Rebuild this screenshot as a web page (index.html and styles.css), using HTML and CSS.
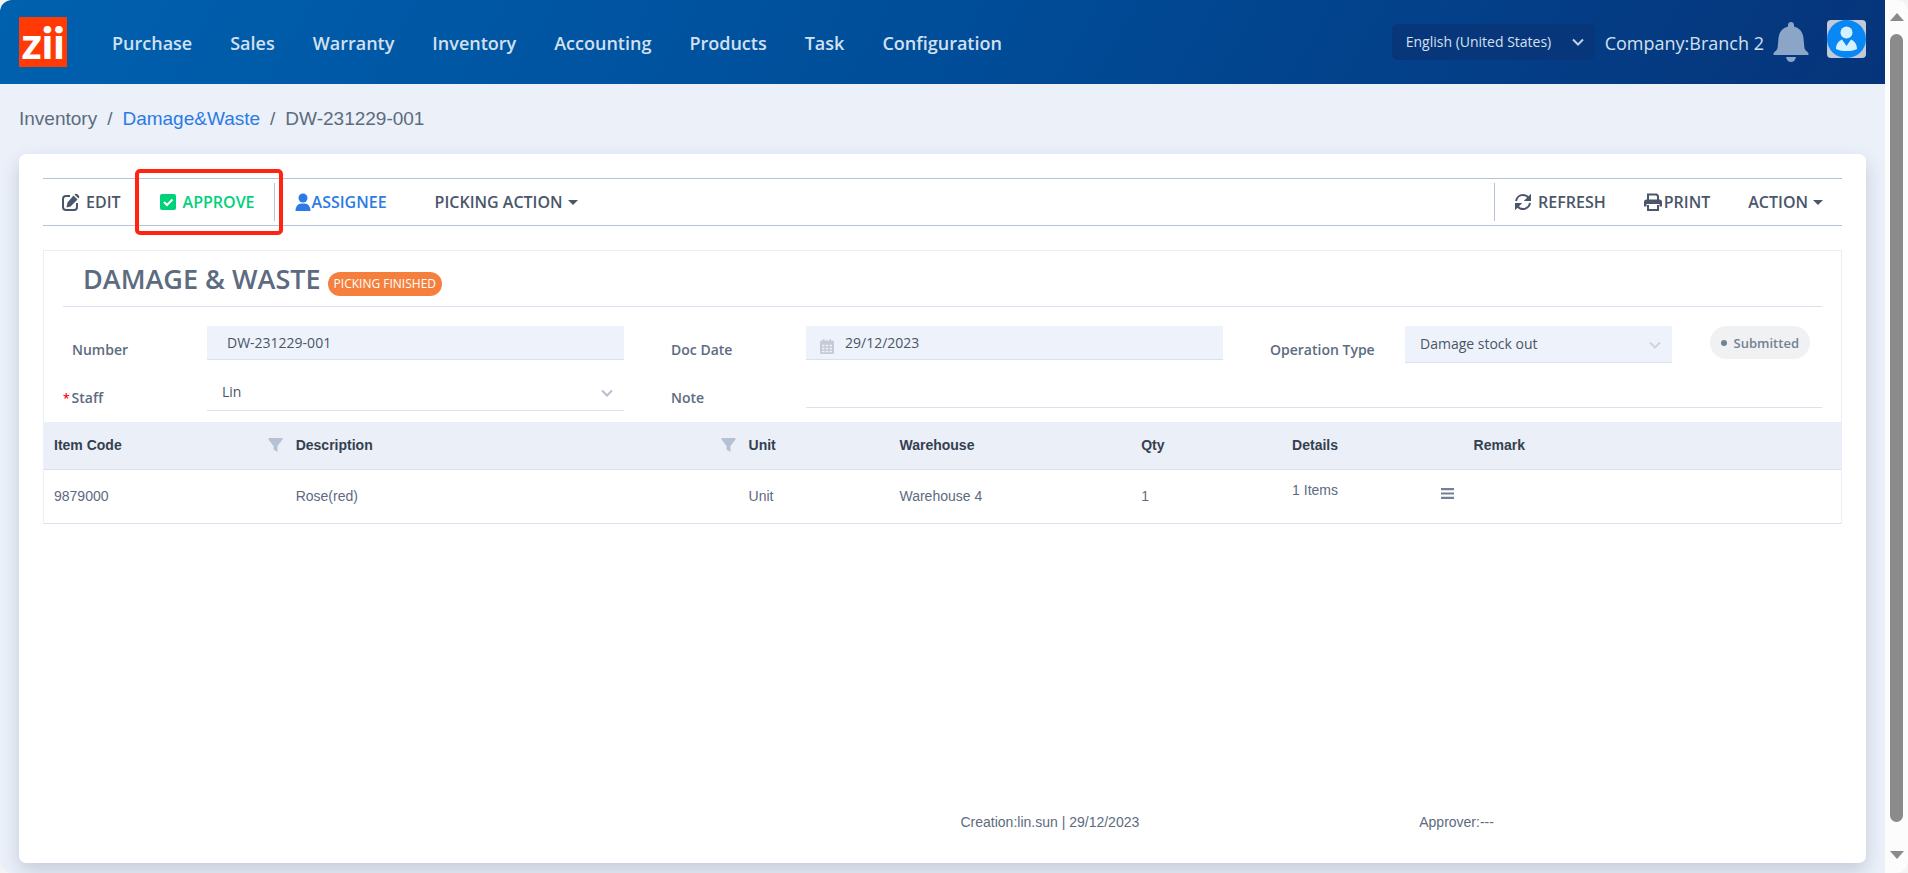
FILE: index.html
```html
<!DOCTYPE html>
<html lang="en">
<head>
<meta charset="utf-8">
<title>Damage &amp; Waste DW-231229-001</title>
<link rel="stylesheet" href="styles.css">
</head>
<body>
<div class="window">
  <div class="page">
    <header class="topbar">
      <a class="logo" href="#">zii</a>
      <nav class="nav">
        <a href="#">Purchase</a>
        <a href="#">Sales</a>
        <a href="#">Warranty</a>
        <a href="#">Inventory</a>
        <a href="#">Accounting</a>
        <a href="#">Products</a>
        <a href="#">Task</a>
        <a href="#">Configuration</a>
      </nav>
      <div class="account">
        <div class="select-wrap">
          <select class="language" aria-label="Language"><option>English (United States)</option></select>
          <svg class="chevron chevron-light" viewBox="0 0 14 14"><path d="M2 4.500l5 5 5-5"/></svg>
        </div>
        <span class="company">Company:Branch 2</span>
        <button class="icon-button" aria-label="Notifications">
          <svg class="bell" viewBox="0 0 36 40"><path d="M18 0c1.700 0 3 1.300 3 3v1.500c5.500 1.300 9 5.800 9.500 11.500l.8 9c.3 2.500 1.500 3.700 3.200 5 1.500 1.200 1.700 3-.5 3h-32c-2.200 0-2-1.800-.5-3 1.700-1.300 2.900-2.500 3.200-5l.8-9C6 10.300 9.500 5.800 15 4.500V3c0-1.700 1.300-3 3-3zM13 35h10c-.5 3-2.500 5-5 5s-4.500-2-5-5z"/></svg>
        </button>
        <button class="icon-button avatar" aria-label="Profile">
          <svg viewBox="0 0 39 38"><rect width="39" height="38" rx="4" fill="#c3c9d6"/><ellipse cx="19.500" cy="19" rx="19.500" ry="19" fill="#0788f4"/><circle cx="19.500" cy="12.500" r="6" fill="#d5f0ff"/><path d="M15 19.500l4.500 6.500 4.500-6.500c3.800 1.800 6 5 6 9.500-3 1.700-7 2-10.500 2S12 30.700 9 29c0-4.500 2.200-7.700 6-9.500z" fill="#d5f0ff"/></svg>
        </button>
      </div>
    </header>

    <nav class="breadcrumb" aria-label="Breadcrumb">
      <span>Inventory</span><span>/</span><a href="#">Damage&amp;Waste</a><span>/</span><span>DW-231229-001</span>
    </nav>

    <main class="card">
      <div class="toolbar">
        <button class="tool">
          <svg class="icon gap" viewBox="0 0 18 18"><path d="M8 3H4a3 3 0 0 0-3 3v8a3 3 0 0 0 3 3h8a3 3 0 0 0 3-3v-4" fill="none" stroke="currentColor" stroke-width="2"/><path d="M11.500 2.500l4 4-7 7-4 1 1-5zM12.500 1.500c.8-1 2.200-1 3-.2l1.200 1.200c.8.8.8 2.200-.2 3z"/></svg>
          EDIT
        </button>
        <div class="approve">
          <button class="tool tool-green">
            <svg class="icon gap" viewBox="0 0 18 18"><rect x="1" y="1" width="16" height="16" rx="2"/><path d="M5 9l3 3 5.500-5.500" fill="none" stroke="#fff" stroke-width="2"/></svg>
            APPROVE
          </button>
        </div>
        <button class="tool tool-blue">
          <svg class="icon" viewBox="0 0 18 18"><circle cx="9" cy="5" r="4.500"/><path d="M1.500 18c0-4.500 2.500-7.500 6-7.500h3c3.500 0 6 3 6 7.500z"/></svg>
          ASSIGNEE
        </button>
        <button class="tool tool-menu">PICKING ACTION<span class="caret"></span></button>
        <div class="toolbar-right">
          <button class="tool">
            <svg class="icon gap" viewBox="0 0 18 18"><path d="M2 8c.6-3.600 3.500-6 7-6 2.300 0 4.200 1 5.500 2.700M16 10c-.6 3.600-3.500 6-7 6-2.300 0-4.200-1-5.500-2.700" fill="none" stroke="currentColor" stroke-width="2"/><path d="M17 .8V8h-7.200zM1 17.200V10h7.200z"/></svg>
            REFRESH
          </button>
          <button class="tool tool-print">
            <svg class="icon" viewBox="0 0 18 18"><path d="M4 7V1.500h8.500L14 3v4M4 12v5h10v-5" fill="none" stroke="currentColor" stroke-width="2"/><path d="M2.500 6.500h13C17 6.500 18 7.500 18 9v4.500h-2.500V11h-13v2.500H0V9c0-1.500 1-2.500 2.500-2.500z"/></svg>
            PRINT
          </button>
          <button class="tool">ACTION<span class="caret"></span></button>
        </div>
      </div>

      <section class="panel">
        <div class="panel-head">
          <h1>DAMAGE &amp; WASTE</h1>
          <span class="badge">PICKING FINISHED</span>
        </div>
        <form class="form">
          <div class="field">
            <label for="number">Number</label>
            <input class="control filled" id="number" value="DW-231229-001" readonly>
          </div>
          <div class="field">
            <label for="doc-date">Doc Date</label>
            <div class="date-wrap filled">
              <svg class="calendar" viewBox="0 0 14 15"><path d="M3 0h1.500v1.500h5V0H11v1.500h1.500c.8 0 1.500.7 1.500 1.500v1H0V3c0-.8.7-1.500 1.500-1.500H3zM0 4h14v9.500c0 .8-.7 1.500-1.500 1.500h-11C.7 15 0 14.300 0 13.500z"/><path d="M2 6.500h2.500M5.800 6.500h2.500M9.600 6.500H12M2 9.500h2.500M5.800 9.500h2.500M9.600 9.500H12M2 12.500h2.500M5.800 12.500h2.500M9.600 12.500H12" stroke="#eef3fb" stroke-width="1.500"/></svg>
              <input class="date" id="doc-date" value="29/12/2023" readonly>
            </div>
          </div>
          <div class="field">
            <label for="operation">Operation Type</label>
            <div class="type-row">
              <div class="select-wrap grow">
                <select class="control filled select" id="operation"><option>Damage stock out</option></select>
                <svg class="chevron chevron-faint" viewBox="0 0 14 14"><path d="M2 4.500l5 5 5-5"/></svg>
              </div>
              <span class="status">Submitted</span>
            </div>
          </div>
          <div class="field">
            <label class="required" for="staff">Staff</label>
            <div class="select-wrap">
              <select class="control select" id="staff"><option>Lin</option></select>
              <svg class="chevron" viewBox="0 0 14 14"><path d="M2 4.500l5 5 5-5"/></svg>
            </div>
          </div>
          <div class="field wide">
            <label for="note">Note</label>
            <input class="control" id="note">
          </div>
        </form>

        <table class="items">
          <colgroup><col class="c-code"><col class="c-desc"><col class="c-unit"><col class="c-ware"><col class="c-qty"><col class="c-det"><col></colgroup>
          <thead>
            <tr>
              <th><div class="head-cell">Item Code<svg class="filter" viewBox="0 0 14 14"><path d="M0 0h14v1.500L9 8v6l-4-2.500V8L0 1.500z"/></svg></div></th>
              <th><div class="head-cell">Description<svg class="filter" viewBox="0 0 14 14"><path d="M0 0h14v1.500L9 8v6l-4-2.500V8L0 1.500z"/></svg></div></th>
              <th>Unit</th><th>Warehouse</th><th>Qty</th><th>Details</th><th>Remark</th>
            </tr>
          </thead>
          <tbody>
            <tr>
              <td>9879000</td><td>Rose(red)</td><td>Unit</td><td>Warehouse 4</td><td>1</td>
              <td class="details"><div class="detail-cell">1 Items<button class="icon-button" aria-label="Show details"><svg class="lines" viewBox="0 0 12 12"><path d="M0 2h12M0 6h12M0 10h12"/></svg></button></div></td>
              <td></td>
            </tr>
          </tbody>
        </table>
      </section>

      <footer class="audit"><span>Creation:lin.sun | 29/12/2023</span><span>Approver:---</span></footer>
    </main>
  </div>
  <div class="scrollbar" aria-hidden="true">
    <span class="arrow-up"></span><span class="thumb"></span><span class="arrow-down"></span>
  </div>
</div>
</body>
</html>
```
FILE: styles.css
```css
* { box-sizing: border-box; }
body {
  margin: 0;
  background: #f4f4f4;
  color: #5d6b80;
  font: 14px/20px "Liberation Sans", Arial, sans-serif;
}
a { color: inherit; text-decoration: none; }
button, input, select {
  margin: 0;
  padding: 0;
  border: 0;
  background: none;
  color: inherit;
  font: inherit;
}
select { appearance: none; width: 100%; }
svg { display: block; flex: none; fill: currentColor; }

.window {
  display: flex;
  min-height: 100vh;
  overflow: hidden;
  border-radius: 12px;
  background: #ebf0f9;
}
.page { flex: 1; display: flex; flex-direction: column; min-width: 0; padding-bottom: 10px; }

.topbar {
  display: flex;
  align-items: center;
  height: 84px;
  padding: 0 19px;
  background: linear-gradient(120deg, #0061af, #004d99 50%, #06347a);
  color: #d3e0ef;
  font-family: "Open Sans", "Noto Sans", sans-serif;
}
.logo {
  width: 48px;
  height: 50px;
  background: #ff3a05;
  color: #fff;
  font: 900 44px/50px Lato, sans-serif;
  text-align: center;
}
.nav { display: flex; gap: 38px; margin-left: 45px; padding-top: 2px; font-size: 18px; font-weight: 600; line-height: 24px; }
.account { display: flex; align-items: center; margin-left: auto; }
.select-wrap { display: grid; align-items: center; }
.select-wrap > * { grid-area: 1 / 1; }
.language {
  width: 203px;
  height: 36px;
  padding: 0 14px;
  border-radius: 6px;
  background: #07367b;
  font-size: 14px;
}
.chevron {
  width: 14px;
  height: 14px;
  margin-right: 10px;
  justify-self: end;
  fill: none;
  stroke: #b4bfd0;
  stroke-width: 2;
  pointer-events: none;
}
.chevron-light { stroke: #c3d1e4; }
.chevron-faint { stroke: #ccd5e3; }
.company { margin: 0 9px 0 10px; padding-top: 2px; font-size: 18px; }
.icon-button { cursor: pointer; }
.bell { width: 36px; height: 40px; color: #8ba5c8; }
.avatar { margin: 0 0 6px 18px; }
.avatar svg { width: 39px; height: 38px; }

.breadcrumb { display: flex; gap: 10px; padding: 23px 19px 23px; font-size: 19px; line-height: 24px; }
.breadcrumb a { color: #2c7be5; }

.card {
  flex: 1;
  display: flex;
  flex-direction: column;
  margin: 0 19px;
  padding: 24px 24px 31px;
  border-radius: 7px;
  background: #fff;
  box-shadow: 0 8px 18px rgba(65, 80, 110, .22);
}

.toolbar {
  display: flex;
  align-items: center;
  height: 48px;
  border: solid #b6c3d4;
  border-width: 1px 0;
  color: #4a5669;
  font: 600 16px/24px "Open Sans", "Noto Sans", sans-serif;
}
.tool { display: flex; align-items: center; padding: 0 19px; cursor: pointer; white-space: nowrap; }
.tool:first-child { padding-right: 14px; }
.icon { width: 18px; height: 18px; }
.gap { margin-right: 6px; }
.approve {
  flex: none;
  display: flex;
  align-items: center;
  height: 66px;
  padding-right: 4px;
  border: 4px solid #ff2412;
  border-radius: 5px;
}
.approve .tool { height: 38px; padding: 0 19px 0 20px; border-right: 1px solid #b6c3d4; }
.tool-green { color: #00d27a; }
.tool-blue { padding: 0 48px 0 11px; color: #2c7be5; }
.tool-menu { padding: 0; }
.caret { margin-left: 5px; border: 5px solid transparent; border-top-color: currentColor; border-bottom: 0; }
.toolbar-right { display: flex; align-items: center; height: 38px; margin-left: auto; border-left: 1px solid #b6c3d4; }
.toolbar-right .tool { padding: 0 19px; }
.tool-print { gap: 2px; }

.panel { margin-top: 24px; border: 1px solid #eaeff7; border-bottom: 0; }
.panel-head {
  display: flex;
  align-items: center;
  gap: 7px;
  height: 56px;
  margin: 0 19px;
  padding-left: 20px;
  border-bottom: 1px solid #d8e2ef;
  font-family: "Open Sans", "Noto Sans", sans-serif;
}
h1 { margin: 0; font-size: 27px; font-weight: 600; line-height: 36px; }
.badge {
  margin-top: 10px;
  padding: 2px 6px;
  border-radius: 12px;
  background: #f5803e;
  color: #fff;
  font-size: 12px;
  line-height: 20px;
}

.form {
  display: grid;
  grid-template-columns: repeat(3, minmax(0, 1fr));
  row-gap: 11px;
  padding: 19px 0 11px;
  font-family: "Open Sans", "Noto Sans", sans-serif;
}
.field { display: grid; grid-template-columns: 135px minmax(0, 1fr); align-items: start; padding: 0 19px 0 28px; }
.wide { grid-column: span 2; }
.field label { padding-top: 14px; font-weight: 600; font-size: 14px; }
.required::before { content: "*"; margin-left: -9px; padding-right: 2px; color: #f00; font-size: 12px; }
.control {
  width: 100%;
  height: 34px;
  padding: 0 20px;
  border-bottom: 1px solid #d8e2ef;
  color: #4a5568;
  font-size: 14px;
}
.select { height: 37px; padding: 0 15px; }
.filled { background: #eef3fb; }
.date-wrap { display: flex; align-items: center; gap: 11px; height: 34px; padding-left: 14px; border-bottom: 1px solid #d8e2ef; }
.date { flex: 1; min-width: 0; color: #4a5568; }
.calendar { width: 14px; height: 15px; margin-top: 8px; color: #c5cad8; }
.type-row { display: flex; align-items: start; gap: 38px; padding-right: 12px; }
.grow { flex: 1; }
.status {
  display: flex;
  align-items: center;
  gap: 7px;
  height: 33px;
  padding: 0 11px;
  border-radius: 17px;
  background: #f0f1f3;
  color: #748194;
  font-weight: 600;
  font-size: 13px;
}
.status::before { content: ""; width: 6px; height: 6px; border-radius: 50%; background: currentColor; }

.items { width: 100%; border-collapse: collapse; table-layout: fixed; }
.c-code { width: 13.45%; }
.c-desc { width: 25.2%; }
.c-unit { width: 8.4%; }
.c-ware { width: 13.45%; }
.c-qty { width: 8.4%; }
.c-det { width: 10.1%; }
.items th, .items td { height: 47px; padding: 0 0 0 10px; border-bottom: 1px solid #d8e2ef; text-align: left; }
.items th { background: #ebf0f8; color: #344050; }
.items td { height: 54px; }
.head-cell { display: flex; align-items: center; justify-content: space-between; padding-right: 3px; }
.filter { width: 15px; height: 14px; color: #b6c1d3; }
.items .details { padding-bottom: 12px; }
.detail-cell { display: flex; align-items: center; justify-content: space-between; padding-right: 10px; }
.lines { width: 13px; height: 13px; margin-top: 6px; stroke: #748194; stroke-width: 2; }

.audit { display: grid; grid-template-columns: 51% 25.5% 1fr; margin-top: auto; }
.audit span:first-child { grid-column: 2; }

.scrollbar { display: flex; flex-direction: column; align-items: center; width: 23px; padding: 13px 0 14px; background: #fcfcfc; }
.thumb { flex: 1; width: 13px; margin: 13px 0 29px; border-radius: 7px; background: #8b8b8b; }
.arrow-up { border: 7px solid transparent; border-top: 0; border-bottom: 8px solid #8b8b8b; }
.arrow-down { border: 7px solid transparent; border-bottom: 0; border-top: 8px solid #8b8b8b; }
```
